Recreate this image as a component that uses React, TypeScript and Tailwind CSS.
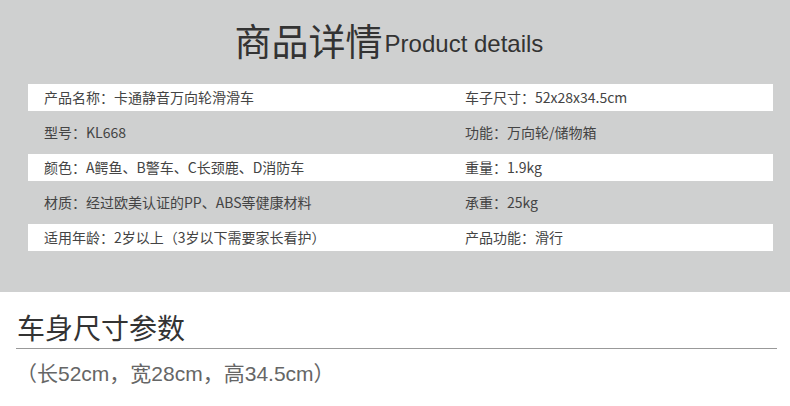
const specs: [string, string][] = [
  ['产品名称：卡通静音万向轮滑滑车', '车子尺寸：52x28x34.5cm'],
  ['型号：KL668', '功能：万向轮/储物箱'],
  ['颜色：A鳄鱼、B警车、C长颈鹿、D消防车', '重量：1.9kg'],
  ['材质：经过欧美认证的PP、ABS等健康材料', '承重：25kg'],
  ['适用年龄：2岁以上（3岁以下需要家长看护）', '产品功能：滑行'],
]

const cjk = { fontFamily: '"Noto Sans CJK SC", sans-serif' }
const narrow = { fontFamily: '"Liberation Sans", "Noto Sans CJK SC", sans-serif' }

export default function App() {
  return (
    <div className="w-[790px] h-[406px] bg-white overflow-hidden">
      <section className="h-[292px] bg-[#cfd0d0]">
        <div className="flex h-[80px] items-center justify-center pr-[12px] text-[#333]">
          <span className="text-[37px] leading-none" style={cjk}>商品详情</span>
          <span className="ml-[2px] mt-[8px] text-[24px] leading-none" style={narrow}>Product details</span>
        </div>

        <div className="ml-[28px] mr-[17px]">
          {specs.map(([left, right], i) => (
            <div key={i} className="h-[35px] py-[4px]">
              <div
                className={`grid h-full grid-cols-[437px_1fr] items-center text-[14px] text-[#444] ${i % 2 === 0 ? 'bg-white' : ''}`}
                style={cjk}
              >
                <span className="pl-[16px]">{left}</span>
                <span>{right}</span>
              </div>
            </div>
          ))}
        </div>
      </section>

      <section className="pl-[16px] pr-[13px] pt-[17px]">
        <h2 className="pl-[1px] text-[28px] leading-[36px] text-[#333]" style={cjk}>车身尺寸参数</h2>
        <div className="mt-[3px] h-px bg-[#999]" />
        <p className="mt-[12px] text-[21px] leading-[26px] text-[#666]" style={narrow}>（长52cm，宽28cm，高34.5cm）</p>
      </section>
    </div>
  )
}
